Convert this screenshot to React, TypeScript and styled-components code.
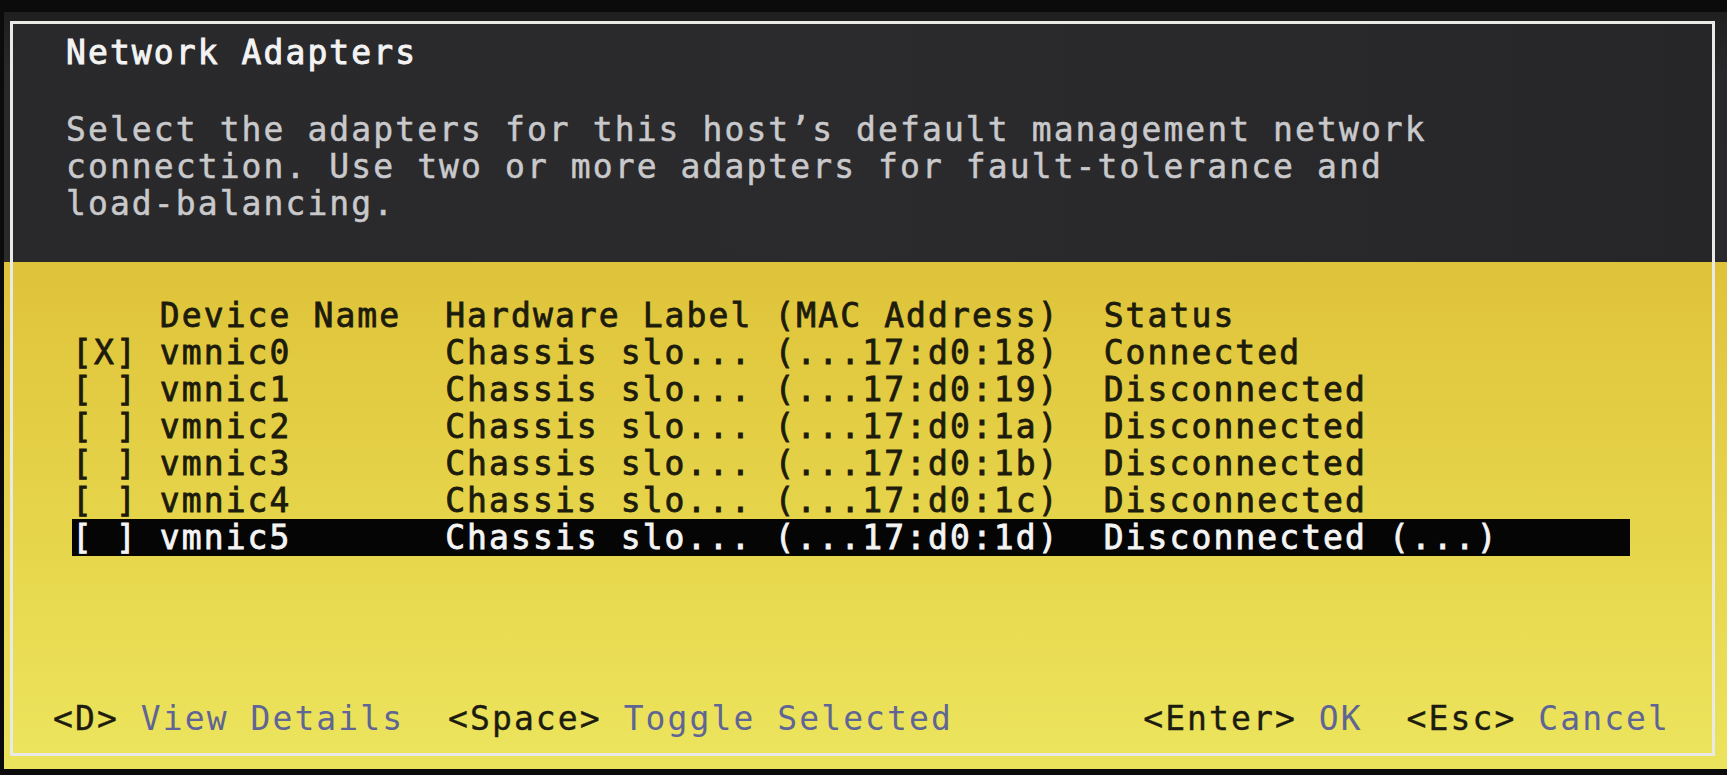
import React from "react";
import styled, { createGlobalStyle } from "styled-components";

const GlobalStyle = createGlobalStyle`
  html, body {
    margin: 0;
    padding: 0;
    background: #0b0b0b;
    overflow: hidden;
  }
`;

const CELL = 21.95;

const Screen = styled.div`
  width: 1727px;
  height: 775px;
  background: #0b0b0b;
  display: flex;
  flex-direction: column;
  padding: 12px 0 6px 4px;
  box-sizing: border-box;
  font-family: "DejaVu Sans Mono", "Liberation Mono", monospace;
  font-size: 33px;
  letter-spacing: 2.08px;
`;

const Display = styled.div`
  flex: 1;
  display: flex;
  flex-direction: column;
  padding: 9px 12px 13px 6px;
  background: linear-gradient(
    to bottom,
    #1f1f20 0,
    #29292b 60px,
    #2a2a2c 250px,
    #dfc23a 250px,
    #e6d24a 480px,
    #ece35c 100%
  );
`;

const Frame = styled.div`
  flex: 1;
  display: flex;
  flex-direction: column;
  border: 3px solid #e9e9e6;
`;

const Header = styled.div`
  height: 238px;
  box-sizing: border-box;
  padding: 10px 0 0 53px;
  background: linear-gradient(to right, #29292b, #2b2b2d 50%, #262628);
  display: flex;
  flex-direction: column;
`;

const Title = styled.div`
  line-height: 37px;
  color: #f3f3f3;
  white-space: pre;
  -webkit-text-stroke: 0.9px #f3f3f3;
`;

const Description = styled.div`
  margin-top: 40px;
  display: flex;
  flex-direction: column;
  color: #c9c9cc;
  -webkit-text-stroke: 0.5px #c9c9cc;
`;

const Line = styled.div`
  line-height: 37px;
  white-space: pre;
`;

const Body = styled.div`
  flex: 1;
  display: flex;
  flex-direction: column;
  padding: 35px 0 16px 0;
  background: linear-gradient(to bottom, #dfc33a, #e6d54b 55%, #ece45d);
`;

const Table = styled.div`
  display: flex;
  flex-direction: column;
  padding-left: 59px;
`;

const Row = styled.div<{ $selected?: boolean }>`
  display: grid;
  grid-template-columns: ${CELL * 4}px ${CELL * 13}px ${CELL * 15}px ${CELL * 15}px ${CELL * 24}px;
  width: ${CELL * 71}px;
  height: 37px;
  line-height: 37px;
  white-space: pre;
  color: ${(p) => (p.$selected ? "#f4f4f4" : "#1c1b0c")};
  -webkit-text-stroke: 0.8px ${(p) => (p.$selected ? "#f4f4f4" : "#1c1b0c")};
  background: ${(p) => (p.$selected ? "#050505" : "transparent")};
`;

const Cell = styled.span`
  overflow: hidden;
`;

const Footer = styled.div`
  margin-top: auto;
  display: flex;
  justify-content: space-between;
  padding: 0 42px 0 40px;
  line-height: 37px;
  white-space: pre;
`;

const KeyGroup = styled.div`
  display: flex;
`;

const Key = styled.span`
  color: #1d1c10;
  -webkit-text-stroke: 0.4px #1d1c10;
`;

const Action = styled.span`
  color: #5f6594;
`;

type Adapter = {
  checked: boolean;
  name: string;
  label: string;
  mac: string;
  status: string;
};

const adapters: Adapter[] = [
  { checked: true, name: "vmnic0", label: "Chassis slo...", mac: "(...17:d0:18)", status: "Connected" },
  { checked: false, name: "vmnic1", label: "Chassis slo...", mac: "(...17:d0:19)", status: "Disconnected" },
  { checked: false, name: "vmnic2", label: "Chassis slo...", mac: "(...17:d0:1a)", status: "Disconnected" },
  { checked: false, name: "vmnic3", label: "Chassis slo...", mac: "(...17:d0:1b)", status: "Disconnected" },
  { checked: false, name: "vmnic4", label: "Chassis slo...", mac: "(...17:d0:1c)", status: "Disconnected" },
  { checked: false, name: "vmnic5", label: "Chassis slo...", mac: "(...17:d0:1d)", status: "Disconnected (...)" },
];

export default function App() {
  return (
    <>
      <GlobalStyle />
      <Screen>
        <Display>
          <Frame>
            <Header>
              <Title>Network Adapters</Title>
              <Description>
                <Line>Select the adapters for this host’s default management network</Line>
                <Line>connection. Use two or more adapters for fault-tolerance and</Line>
                <Line>load-balancing.</Line>
              </Description>
            </Header>
            <Body>
              <Table>
                <Row>
                  <Cell />
                  <Cell>Device Name</Cell>
                  <Cell>Hardware Label</Cell>
                  <Cell>(MAC Address)</Cell>
                  <Cell>Status</Cell>
                </Row>
                {adapters.map((a, i) => (
                  <Row key={a.name} $selected={i === adapters.length - 1}>
                    <Cell>{a.checked ? "[X]" : "[ ]"}</Cell>
                    <Cell>{a.name}</Cell>
                    <Cell>{a.label}</Cell>
                    <Cell>{a.mac}</Cell>
                    <Cell>{a.status}</Cell>
                  </Row>
                ))}
              </Table>
              <Footer>
                <KeyGroup>
                  <Key>&lt;D&gt;</Key>
                  <Action> View Details  </Action>
                  <Key>&lt;Space&gt;</Key>
                  <Action> Toggle Selected</Action>
                </KeyGroup>
                <KeyGroup>
                  <Key>&lt;Enter&gt;</Key>
                  <Action> OK  </Action>
                  <Key>&lt;Esc&gt;</Key>
                  <Action> Cancel</Action>
                </KeyGroup>
              </Footer>
            </Body>
          </Frame>
        </Display>
      </Screen>
    </>
  );
}
